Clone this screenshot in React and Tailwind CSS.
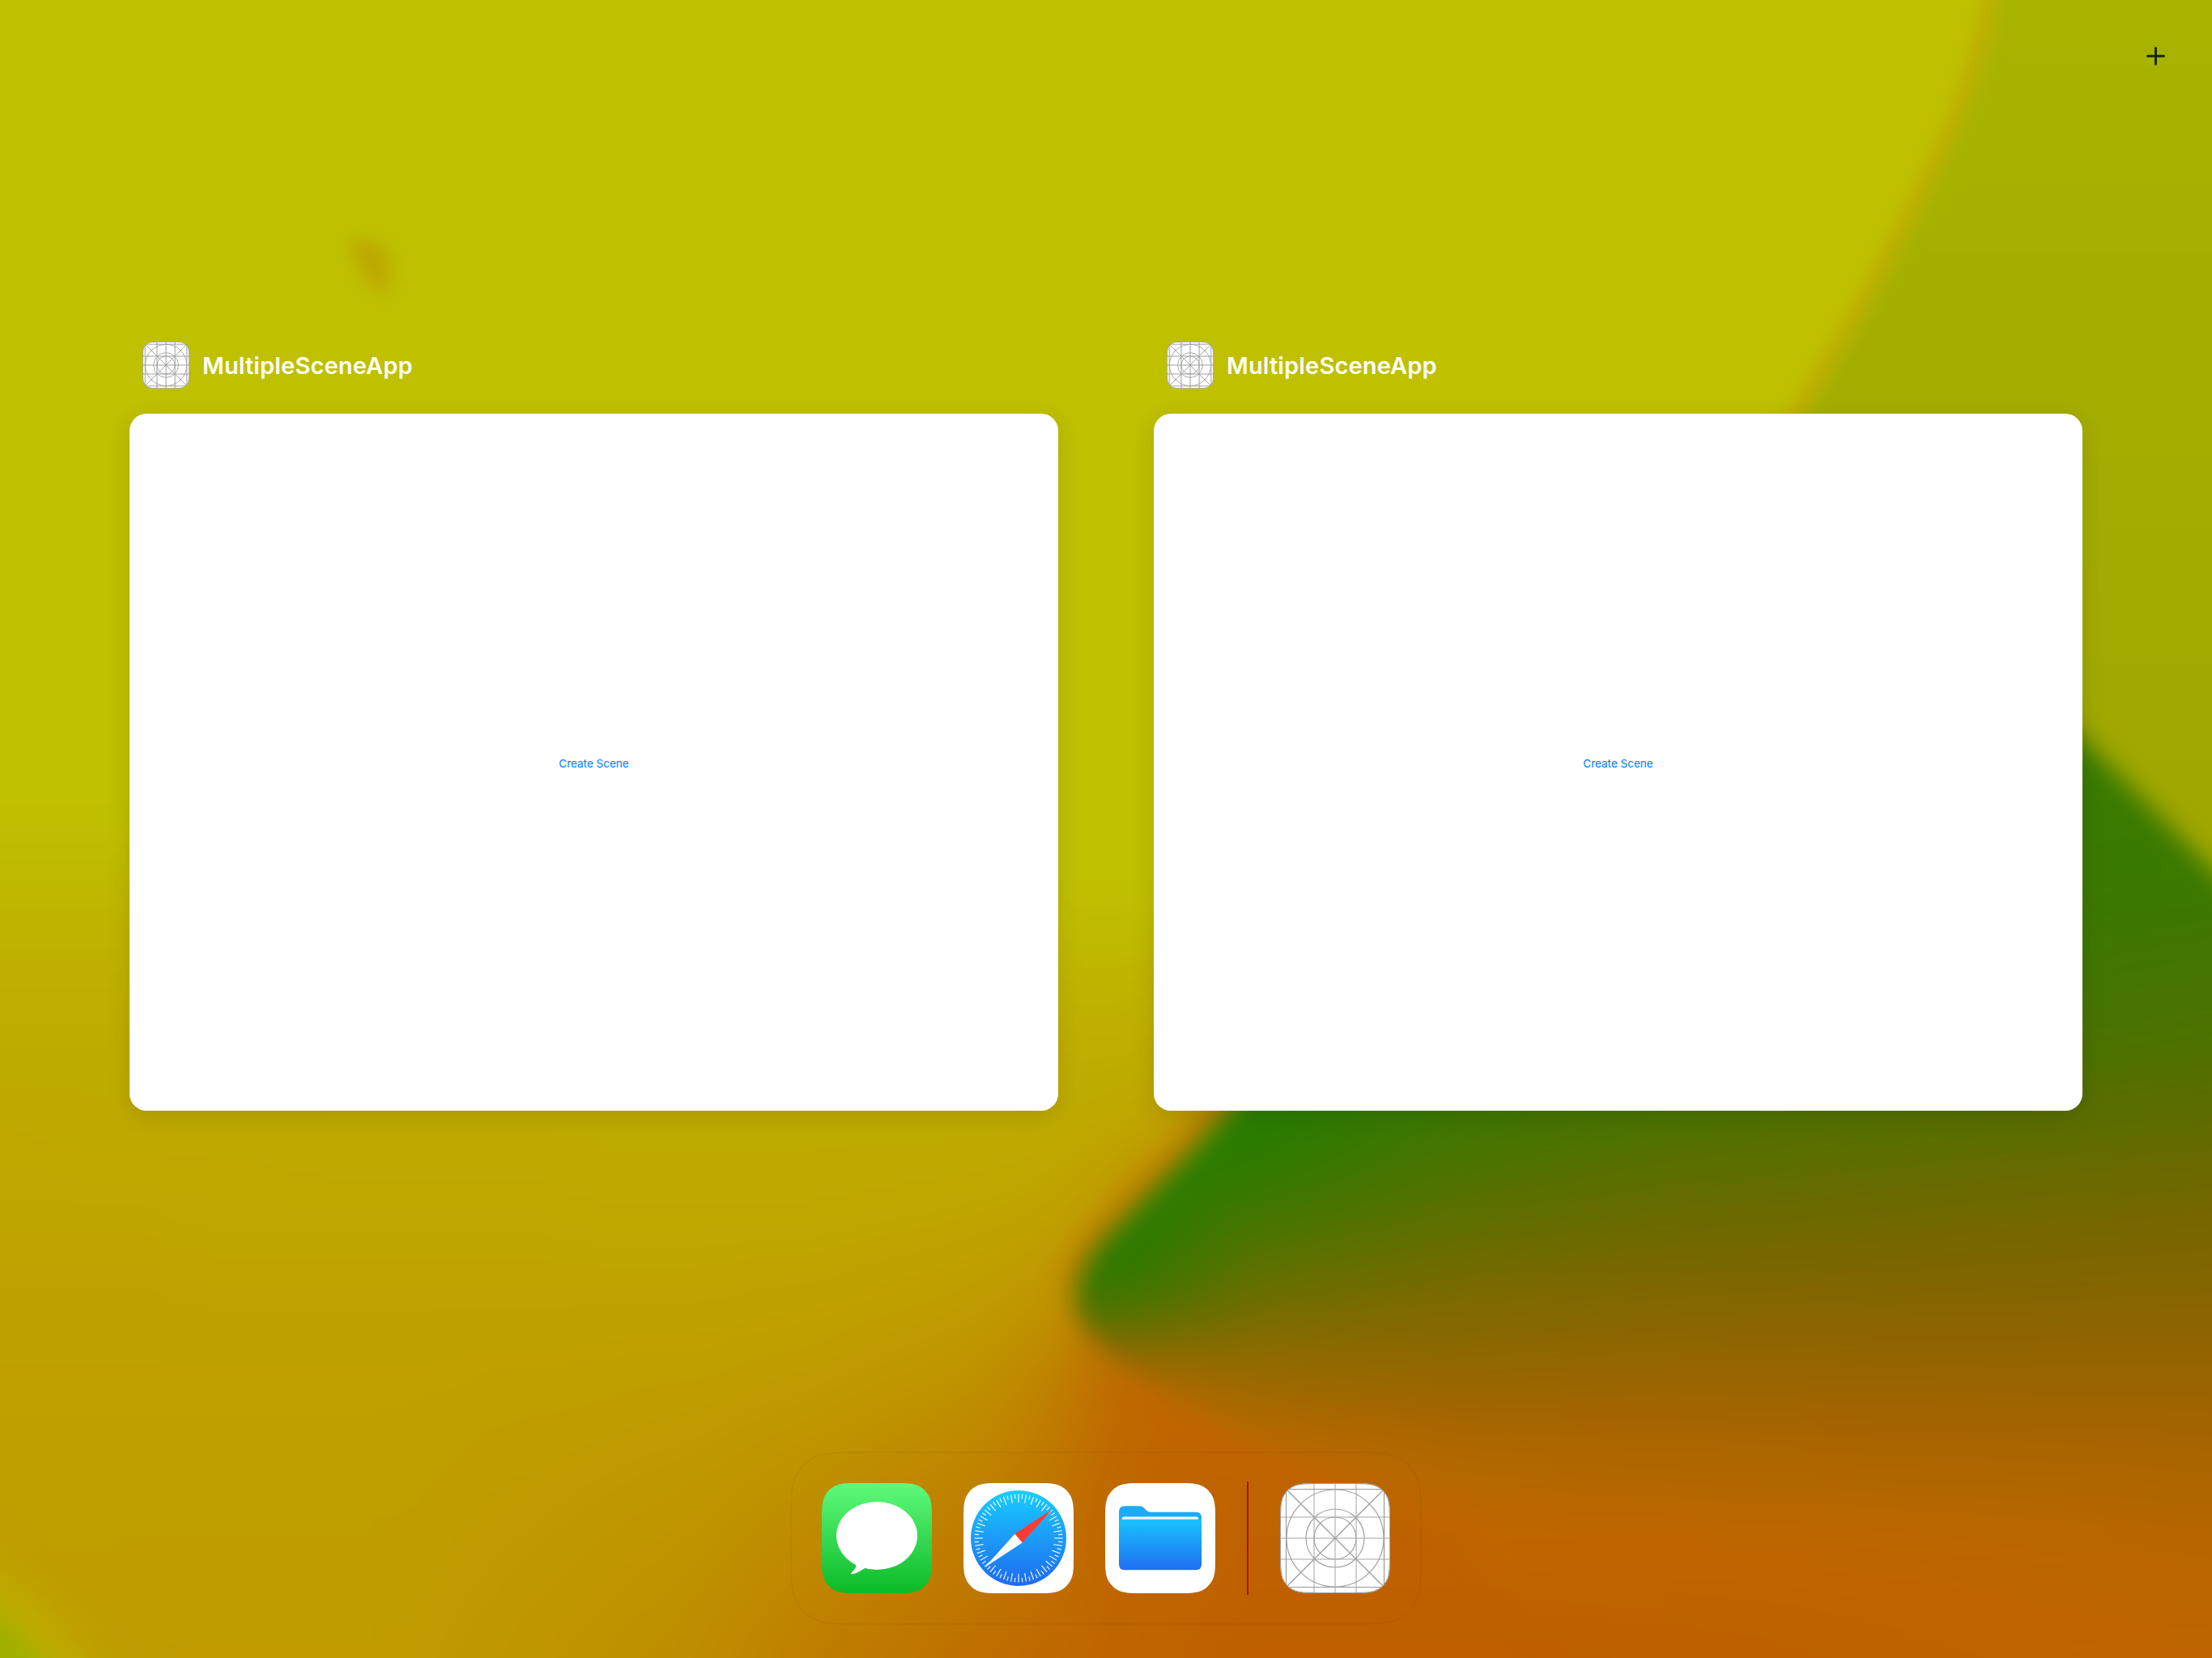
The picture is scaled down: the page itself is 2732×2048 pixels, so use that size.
const APPLE = [1.528665, 1.08849296, 0.86840694, 0.63149379, 0.37282383, 0.16905956, 0.07491139];

/* Rounded square with continuous-curvature corners. */
function squircle(w, h, r) {
  const [a, b, c, d, e, f, g] = APPLE.map((k) => k * r);
  return [
    `M${a} 0H${w - a}`,
    `C${w - b} 0 ${w - c} 0 ${w - d} ${g}C${w - e} ${f} ${w - f} ${e} ${w - g} ${d}C${w} ${c} ${w} ${b} ${w} ${a}`,
    `V${h - a}`,
    `C${w} ${h - b} ${w} ${h - c} ${w - g} ${h - d}C${w - f} ${h - e} ${w - e} ${h - f} ${w - d} ${h - g}C${w - c} ${h} ${w - b} ${h} ${w - a} ${h}`,
    `H${a}`,
    `C${b} ${h} ${c} ${h} ${d} ${h - g}C${e} ${h - f} ${f} ${h - e} ${g} ${h - d}C0 ${h - c} 0 ${h - b} 0 ${h - a}`,
    `V${a}`,
    `C0 ${b} 0 ${c} ${g} ${d}C${f} ${e} ${e} ${f} ${d} ${g}C${c} 0 ${b} 0 ${a} 0Z`,
  ].join("");
}

const TILE = squircle(136, 136, 30.5);

/* Colour fields: red/green pairs at fixed heights, listed for key columns. */
const WARM = {
  ys: [1000, 1100, 1200, 1300, 1400, 1500, 1600, 1700, 1850, 2048],
  cols: [
    [-100, [192, 183, 175, 171, 167, 165, 162, 160, 158, 156]],
    [500, [192, 184, 175, 171, 169, 166, 163, 160, 158, 155]],
    [850, [192, 187, 177, 172, 170, 167, 163, 158, 150, 141]],
    [1000, [192, 190, 178, 172, 170, 167, 162, 155, 142, 126]],
    [1200, [192, 192, 180, 173, 170, 165, 157, 147, 128, 110]],
    [1300, [192, 192, 181, 173, 169, 162, 149, 130, 115, 104]],
    [1360, [192, 192, 181, 173, 167, 154, 126, 110, 104, 101]],
    [1430, [192, 192, 179, 172, 162, 130, 110, 103, 100, 98]],
    [1550, [192, 192, 177, 166, 140, 112, 104, 103, 98, 95]],
    [2832, [192, 192, 176, 160, 140, 112, 104, 102, 98, 96]],
  ],
};

const COOL = {
  ys: [1000, 1100, 1200, 1300, 1400, 1450, 1500, 1550, 1600, 1650, 1700, 1750, 1800, 1900, 2048],
  cols: [
    [1250, [[40, 126], [40, 126], [40, 126], [40, 126], [40, 126], [40, 126], [40, 126], [40, 125], [50, 122], [110, 112], [180, 104], [192, 102], [192, 100], [190, 98], [190, 96]]],
    [1400, [[40, 126], [40, 126], [40, 126], [40, 126], [40, 126], [40, 126], [42, 125], [46, 121], [66, 117], [114, 110], [168, 105], [192, 103], [192, 100], [190, 98], [190, 96]]],
    [1550, [[40, 126], [40, 126], [40, 126], [40, 126], [40, 125], [50, 122], [66, 118], [86, 114], [108, 110], [132, 107], [152, 106], [174, 104], [191, 103], [191, 98], [190, 94]]],
    [1800, [[44, 124], [44, 124], [44, 124], [50, 122], [66, 118], [78, 114], [92, 111], [108, 108], [124, 106], [136, 104], [150, 102], [164, 102], [178, 103], [192, 102], [190, 93]]],
    [2050, [[50, 122], [50, 122], [50, 122], [62, 118], [80, 114], [92, 110], [104, 106], [116, 104], [130, 103], [141, 102], [152, 101], [164, 101], [174, 102], [191, 102], [190, 94]]],
    [2400, [[56, 122], [56, 121], [62, 119], [72, 116], [90, 110], [101, 107], [112, 104], [122, 102], [132, 101], [142, 100], [152, 100], [162, 100], [172, 101], [188, 102], [190, 98]]],
    [2832, [[60, 122], [60, 120], [70, 116], [82, 111], [100, 105], [110, 104], [120, 103], [128, 102], [136, 101], [144, 100], [152, 100], [160, 100], [168, 101], [182, 101], [190, 102]]],
  ],
};

const toPair = (v) => (Array.isArray(v) ? v : [191, v]);

function sampleColumn(field, x) {
  const { cols } = field;
  let i = 0;
  while (i < cols.length - 2 && cols[i + 1][0] < x) i++;
  const [x0, a] = cols[i];
  const [x1, b] = cols[i + 1];
  const t = Math.min(1, Math.max(0, (x - x0) / (x1 - x0)));
  return a.map((v, k) => {
    const p = toPair(v);
    const q = toPair(b[k]);
    return `rgb(${Math.round(p[0] + (q[0] - p[0]) * t)},${Math.round(p[1] + (q[1] - p[1]) * t)},0)`;
  });
}

function Field({ id, field, from, to, step }) {
  const strips = [];
  for (let x = from; x < to; x += step) strips.push(x);
  const y0 = field.ys[0];
  const span = field.ys[field.ys.length - 1] - y0;
  return (
    <>
      {strips.map((x) => (
        <g key={x}>
          <linearGradient id={`${id}${x}`} gradientUnits="userSpaceOnUse" x1="0" x2="0" y1={y0} y2={y0 + span}>
            {sampleColumn(field, x + step / 2).map((c, k) => (
              <stop key={k} offset={(field.ys[k] - y0) / span} stopColor={c} />
            ))}
          </linearGradient>
          <rect x={x} y="-100" width={step + 1} height="2300" fill={`url(#${id}${x})`} />
        </g>
      ))}
    </>
  );
}

const RIDGE =
  "M1329 1600Q1332 1566 1361 1533L1471 1421L1518 1370L2000 860Q2250 620 2400 745L2572 912L2640 980L2732 1074L2900 1250V2300H2100L1800 1890L1600 1815L1470 1748L1383 1688Q1325 1640 1329 1600Z";
const OLIVE = "M2468 -60V0Q2449 80 2427 140Q2393 220 2351 295Q2319 360 2282 421L2230 509L2000 840L2500 1300H2900V-60Z";

function Wallpaper() {
  return (
    <svg className="absolute inset-0 h-full w-full" viewBox="0 0 2732 2048" aria-hidden="true">
      <defs>
        <filter id="b8" x="-80%" y="-80%" width="260%" height="260%" colorInterpolationFilters="sRGB"><feGaussianBlur stdDeviation="10" /></filter>
        <filter id="b10" filterUnits="userSpaceOnUse" x="-200" y="-200" width="3200" height="2500" colorInterpolationFilters="sRGB"><feGaussianBlur stdDeviation="10" /></filter>
        <filter id="b16" filterUnits="userSpaceOnUse" x="-200" y="-200" width="3200" height="2600" colorInterpolationFilters="sRGB"><feGaussianBlur stdDeviation="15" /></filter>
        <filter id="b30" filterUnits="userSpaceOnUse" x="-200" y="-200" width="3200" height="2600" colorInterpolationFilters="sRGB"><feGaussianBlur stdDeviation="24" /></filter>
        <linearGradient id="olive" x1="0" x2="0" y1="0" y2="1100" gradientUnits="userSpaceOnUse">
          <stop offset="0" stopColor="#a8b300" />
          <stop offset="1" stopColor="#9fa600" />
        </linearGradient>
        <mask id="ridge" maskUnits="userSpaceOnUse" x="0" y="0" width="2732" height="2048">
          <path d={RIDGE} fill="#fff" filter="url(#b16)" />
        </mask>
      </defs>
      <rect width="2732" height="2048" fill="#bfc000" />
      <g filter="url(#b30)"><Field id="w" field={WARM} from={-100} to={2832} step={20} /></g>
      <path d="M2463 -60V0Q2444 80 2422 140Q2388 220 2346 295Q2314 360 2277 421L2186 570" fill="none" stroke="#c1ab00" strokeWidth="22" filter="url(#b10)" />
      <path d={OLIVE} fill="url(#olive)" filter="url(#b10)" />
      <path d="M1326 1590Q1332 1560 1360 1528L1513 1366L1600 1275" fill="none" stroke="#c17e00" strokeWidth="28" filter="url(#b16)" />
      <g mask="url(#ridge)"><g filter="url(#b30)"><Field id="c" field={COOL} from={1250} to={2840} step={20} /></g></g>
      <path d="M430 300Q452 288 476 308Q488 334 475 364Q456 356 444 330Z" fill="#bda800" filter="url(#b8)" />
      <path d="M-60 1900Q60 1960 150 2110H-60Z" fill="#beac00" filter="url(#b30)" />
      <path d="M-60 1965L0 1995Q35 2020 70 2090H-60Z" fill="#9fb000" filter="url(#b16)" />
    </svg>
  );
}

function TemplateGrid({ small }) {
  const thin = small ? 2.1 : 1.2;
  const wide = small ? 2.4 : 2;
  const soft = small ? "#a0a0a0" : "#d2d2d2";
  const id = small ? "tgs" : "tgl";
  return (
    <svg className={small ? "size-[58px]" : "size-[136px]"} viewBox="0 0 136 136" fill="none">
      <clipPath id={id}><path d={TILE} /></clipPath>
      <g clipPath={`url(#${id})`}>
        <path d={TILE} fill="#fff" />
        <path d="M42 0V136M68 0V136M94 0V136M0 42H136M0 68H136M0 94H136" stroke={soft} strokeWidth={wide} />
        <path d="M7.5 0V136M128.5 0V136M0 7.5H136M0 128.5H136" stroke="#9a9a9a" strokeWidth={thin} />
        <path d="M8 8L128 128M128 8L8 128" stroke="#9a9a9a" strokeWidth={thin} />
        <circle cx="68" cy="68" r="60" stroke="#a0a0a0" strokeWidth={thin} />
        <circle cx="68" cy="68" r="36" stroke="#a0a0a0" strokeWidth={thin} />
        <circle cx="68" cy="68" r="26" stroke="#a0a0a0" strokeWidth={thin} />
        <path d={TILE} stroke="#a0a0a0" strokeWidth={small ? 4 : 2} />
      </g>
    </svg>
  );
}

function MessagesIcon() {
  return (
    <svg className="size-[136px]" viewBox="0 0 136 136">
      <linearGradient id="msg" x1="0" x2="0" y1="0" y2="1">
        <stop offset="0" stopColor="#5ffa7b" />
        <stop offset="1" stopColor="#0bba27" />
      </linearGradient>
      <path d={TILE} fill="url(#msg)" />
      <ellipse cx="68" cy="65" rx="50" ry="42" fill="#fff" />
      <path d="M38 96C43 100 43 102.500 41 105.500C39.500 108 37.500 109.500 36.400 110.700C35.600 111.800 36 112.300 37.500 112.200C44 111.600 49 107.500 52.500 105.500C54 104.700 55 105 58 105.600L66 92Z" fill="#fff" />
    </svg>
  );
}

function SafariIcon() {
  return (
    <svg className="size-[136px]" viewBox="0 0 136 136">
      <linearGradient id="saf" x1="0" x2="0" y1="0" y2="1">
        <stop offset="0" stopColor="#19cdfe" />
        <stop offset="1" stopColor="#1e6af0" />
      </linearGradient>
      <path d={TILE} fill="#fff" />
      <circle cx="68" cy="68" r="59" fill="url(#saf)" />
      {Array.from({ length: 72 }, (_, i) => (
        <path
          key={i}
          d={i % 2 ? "M68 13.500V18.800" : "M68 13.500V24"}
          stroke="#fff"
          strokeOpacity="0.85"
          strokeWidth="1.3"
          transform={`rotate(${i * 5} 68 68)`}
        />
      ))}
      <path d="M109.600 32.200L63.300 62.800L72.700 73.400Z" fill="#ff3b30" />
      <path d="M26 104.200L63.300 62.800L72.700 73.400Z" fill="#fff" />
    </svg>
  );
}

function FilesIcon() {
  return (
    <svg className="size-[136px]" viewBox="0 0 136 136">
      <linearGradient id="fil" x1="0" x2="0" y1="0" y2="1">
        <stop offset="0" stopColor="#19c3fd" />
        <stop offset="1" stopColor="#1e6ef1" />
      </linearGradient>
      <path d={TILE} fill="#fff" />
      <path d="M17 46V35.500Q17 28.300 24.200 28.300H42.500Q45.500 28.300 47.500 30.300L51 33.700Q53 35.700 56 35.700H112Q119 35.700 119 42.700V46Z" fill="#1cabf8" />
      <path d="M20.700 45.500V44Q20.700 41.600 23.100 41.600H112.700Q115.100 41.600 115.100 44V45.500Z" fill="#fff" />
      <path d="M20.700 43.700H115.100V45.500H20.700Z" fill="#b4e4fc" />
      <path d="M17 44.900H119V100.300Q119 107.300 112 107.300H24Q17 107.300 17 100.300Z" fill="url(#fil)" />
    </svg>
  );
}

function SceneCard() {
  return (
    <section className="flex w-[1147px] flex-col">
      <header className="flex h-[58px] items-center gap-4 pl-4">
        <TemplateGrid small />
        <h2 className="text-[29px] leading-none font-semibold tracking-[0.15px] text-white">MultipleSceneApp</h2>
      </header>
      <div className="mt-[31px] flex h-[861px] items-center justify-center rounded-[21px] bg-white shadow-[0_8px_30px_rgba(0,0,0,0.11)]">
        <button className="pt-[5px] text-[13.5px] leading-none text-[#007aff]">Create Scene</button>
      </div>
    </section>
  );
}

export default function App() {
  return (
    <div className="relative isolate h-[2048px] w-[2732px] overflow-hidden font-['Inter',sans-serif]">
      <div className="absolute inset-0 -z-10"><Wallpaper /></div>
      <div className="flex h-full flex-col items-center">
        <div className="flex h-[422px] w-full shrink-0 justify-end pt-[57px] pr-[57px]">
          <button className="size-6" aria-label="New window">
            <svg className="size-6" viewBox="0 0 24 24" stroke="#142a00" strokeWidth="3" strokeLinecap="round">
              <path d="M11.500 2.300V22.300M1.500 12.300H21.500" />
            </svg>
          </button>
        </div>
        <main className="flex h-[950px] w-full shrink-0 gap-[118px] pl-40">
          <SceneCard />
          <SceneCard />
        </main>
        <nav className="relative mt-[421px] flex h-[214px] items-center gap-[39px] px-[39px]">
          <svg className="absolute inset-0 -z-10 h-full w-full" viewBox="0 0 780 214" fill="none">
            <path d={squircle(778, 212, 54)} transform="translate(1 1)" stroke="#000" strokeOpacity="0.07" />
          </svg>
          <MessagesIcon />
          <SafariIcon />
          <FilesIcon />
          <div className="h-[140px] w-0.5 bg-[#a01800]" />
          <TemplateGrid />
        </nav>
      </div>
    </div>
  );
}
